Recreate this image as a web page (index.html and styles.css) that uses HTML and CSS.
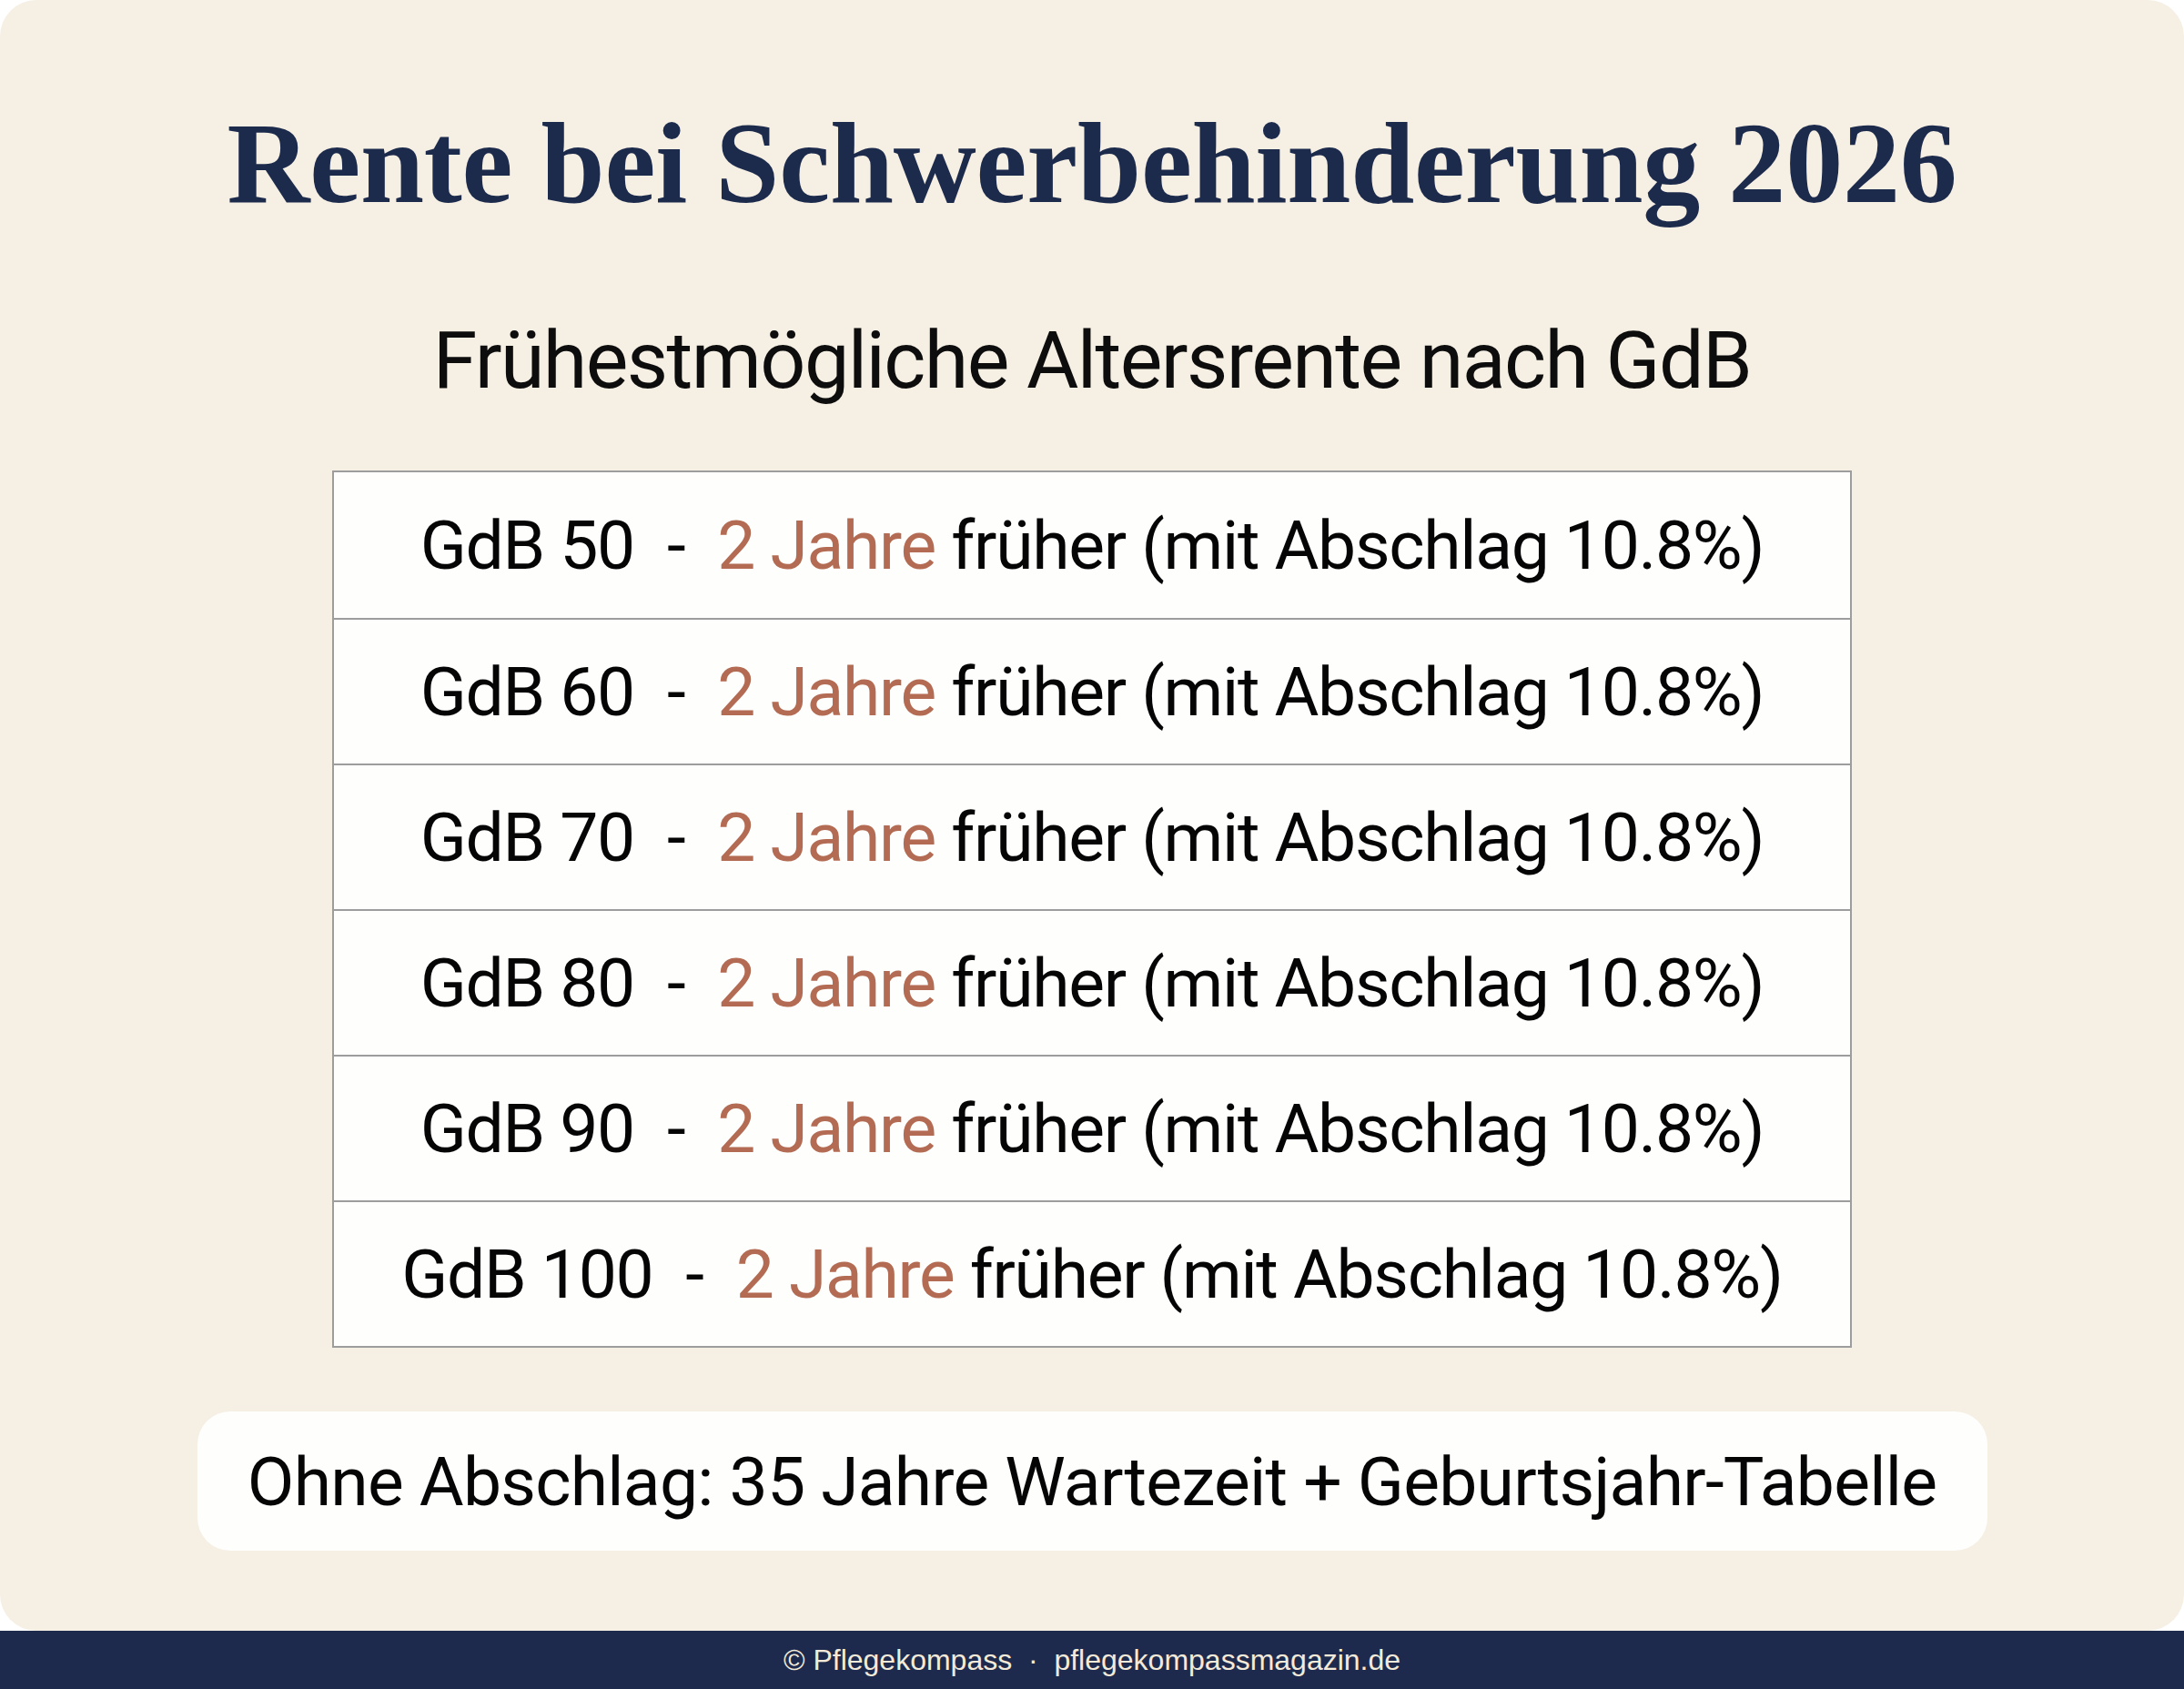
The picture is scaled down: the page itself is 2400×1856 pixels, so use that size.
FILE: index.html
```html
<!DOCTYPE html>
<html lang="de">
<head>
<meta charset="utf-8">
<title>Rente bei Schwerbehinderung 2026</title>
<link rel="stylesheet" href="styles.css">
</head>
<body>
<main class="card">
  <h1 class="title">Rente bei Schwerbehinderung 2026</h1>
  <h2 class="subtitle">Frühestmögliche Altersrente nach GdB</h2>
  <div class="table">
    <div class="row"><span>GdB 50</span><span class="sep">-</span><span class="accent">2 Jahre</span>&nbsp;früher (mit Abschlag 10.8%)</div>
    <div class="row"><span>GdB 60</span><span class="sep">-</span><span class="accent">2 Jahre</span>&nbsp;früher (mit Abschlag 10.8%)</div>
    <div class="row"><span>GdB 70</span><span class="sep">-</span><span class="accent">2 Jahre</span>&nbsp;früher (mit Abschlag 10.8%)</div>
    <div class="row"><span>GdB 80</span><span class="sep">-</span><span class="accent">2 Jahre</span>&nbsp;früher (mit Abschlag 10.8%)</div>
    <div class="row"><span>GdB 90</span><span class="sep">-</span><span class="accent">2 Jahre</span>&nbsp;früher (mit Abschlag 10.8%)</div>
    <div class="row"><span>GdB 100</span><span class="sep">-</span><span class="accent">2 Jahre</span>&nbsp;früher (mit Abschlag 10.8%)</div>
  </div>
  <div class="note">Ohne Abschlag: 35 Jahre Wartezeit + Geburtsjahr-Tabelle</div>
</main>
<footer class="footer">© Pflegekompass &nbsp;·&nbsp; pflegekompassmagazin.de</footer>
</body>
</html>
```
FILE: styles.css
```css
html, body {
  margin: 0;
  padding: 0;
  background: #ffffff;
}

body {
  width: 2400px;
  height: 1856px;
  display: flex;
  flex-direction: column;
}

.card {
  height: 1792px;
  box-sizing: border-box;
  background: #f6efe4;
  border-radius: 40px;
  display: flex;
  flex-direction: column;
  align-items: center;
  padding-top: 117px;
}

.title {
  margin: 0;
  font-family: "Liberation Serif", "DejaVu Serif", serif;
  font-weight: 700;
  font-size: 126px;
  line-height: 126px;
  color: #1c2a4c;
  letter-spacing: -0.2px;
}

.subtitle {
  margin: 109px 0 0;
  font-family: Roboto, "Noto Sans", sans-serif;
  font-weight: 400;
  font-size: 88px;
  line-height: 88px;
  color: #0d0d0d;
  letter-spacing: -1.6px;
}

.table {
  margin-top: 77px;
  width: 1670px;
  box-sizing: border-box;
  border: 2px solid #9d9d9d;
  background: #fefefd;
  display: flex;
  flex-direction: column;
}

.row {
  height: 160px;
  box-sizing: border-box;
  display: flex;
  align-items: center;
  justify-content: center;
  font-family: Roboto, "Noto Sans", sans-serif;
  font-size: 75px;
  line-height: 75px;
  color: #050505;
  letter-spacing: -1.3px;
  white-space: pre;
}

.row + .row {
  border-top: 2px solid #9d9d9d;
}

.sep {
  margin: 0 36px 0 36px;
}

.accent {
  color: #b36c53;
}

.note {
  margin-top: 70px;
  width: 1967px;
  height: 153px;
  border-radius: 36px;
  background: #fefefd;
  display: flex;
  align-items: center;
  justify-content: center;
  font-family: Roboto, "Noto Sans", sans-serif;
  font-size: 75px;
  color: #050505;
  letter-spacing: -0.75px;
  white-space: nowrap;
}

.footer {
  height: 64px;
  background: #1e2a4d;
  color: #f3ead9;
  display: flex;
  align-items: center;
  justify-content: center;
  font-family: "Liberation Sans", Arial, sans-serif;
  font-size: 32px;
  white-space: pre;
}
```
